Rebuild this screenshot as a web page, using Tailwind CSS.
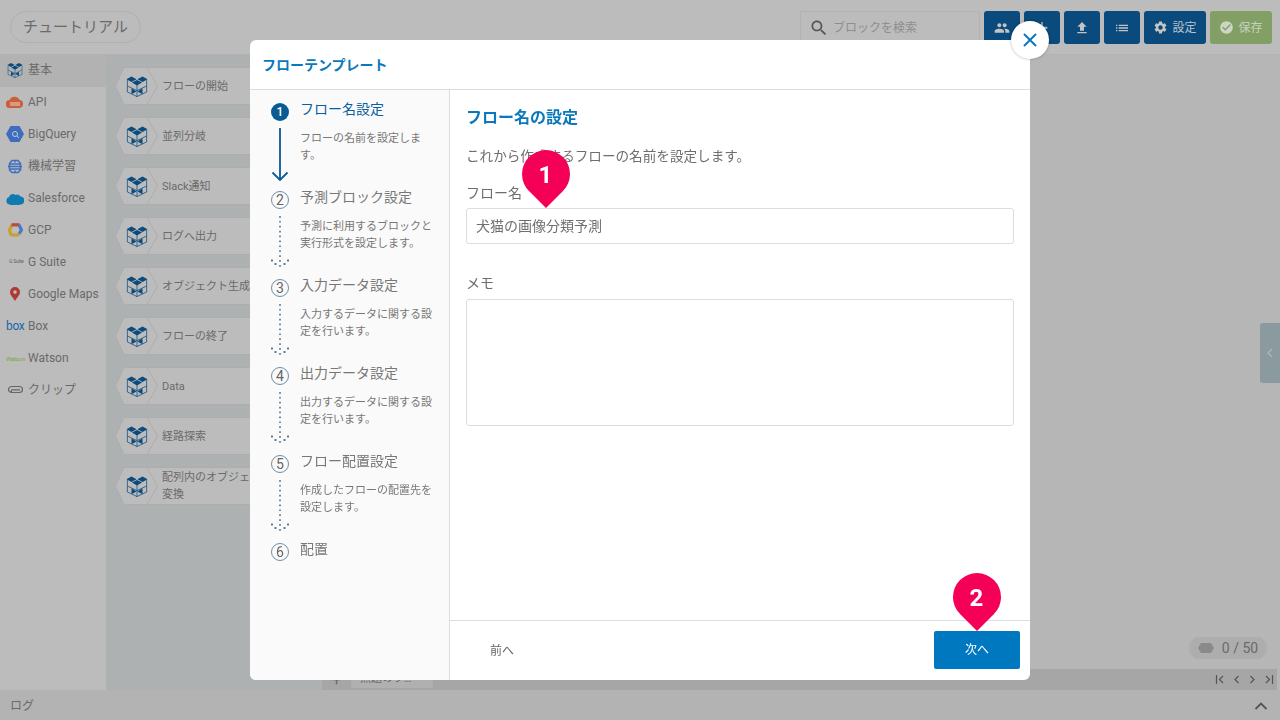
<!DOCTYPE html>
<html lang="ja">
<head>
    <meta charset="UTF-8">
    <title>フローテンプレート</title>
    <script src="https://cdn.jsdelivr.net/npm/@tailwindcss/browser@4"></script>
</head>
<body class="font-['Roboto','Noto_Sans_CJK_JP',sans-serif] overflow-hidden">
    <!-- shared icons -->
    <svg class="hidden">
        <symbol id="cube" viewBox="0 0 24 24">
            <path d="M1.500 5.500v13l10.500 5 10.500-5v-13M12 11v13M1.500 12l10.500 5 10.500-5" fill="none" stroke="#0a4a7c" stroke-width=".8"/>
            <path d="M.5 4.500 6 1.500l5.500 3L6 7.500zM12.500 4.500 18 1.500l5.500 3L18 7.500zM6.500 8.200 12 5.500l5.500 2.700L12 11.500zM6 14.500l5.500 3.500L6 21zM18 14.500 12.500 18l5.500 3z" fill="#0a4a7c"/>
        </symbol>
        <symbol id="hex" viewBox="0 0 43 38">
            <path d="M.5 19 9 .5h23L42.500 19 32 37.500H9z" fill="#bcbcbc" stroke="#adadad"/>
        </symbol>
        <symbol id="dots" viewBox="0 0 18 53">
            <path d="M9 0v53" fill="none" stroke="#5f7c90" stroke-width="1.700" stroke-dasharray="1.700 3.200"/>
            <path d="M0 43.500h2v2H0zM3.500 47h2v2h-2zM16 43.500h2v2h-2zM12.500 47h2v2h-2z" fill="#5f7c90"/>
        </symbol>
    </svg>

    <div class="h-screen w-screen flex flex-col bg-[#b6b6b6] text-[#6a6a6a]">
        <!-- Header -->
        <header class="h-[55px] shrink-0 flex items-center justify-between pl-[10px] pr-2 bg-[#bcbcbc] border-b border-[#b2b2b2]">
            <div class="h-[32px] w-[131px] flex items-center justify-center rounded-full border border-[#b0b0b0] text-[15px] pt-[1px]">チュートリアル</div>
            <div class="flex items-center gap-1 h-[33px] mt-[1px]">
                <div class="w-[180px] h-[33px] flex items-center gap-[4px] pl-2 border border-[#b2b2b2] rounded-[2px] text-[12px] text-[#8e8e8e]">
                    <svg class="w-[20px] h-[20px]" viewBox="0 0 24 24" fill="#555"><path d="M15.500 14h-.79l-.28-.27C15.410 12.590 16 11.110 16 9.500 16 5.910 13.090 3 9.500 3S3 5.910 3 9.500 5.910 16 9.500 16c1.610 0 3.090-.59 4.230-1.570l.27.28v.79l5 4.990L20.490 19l-4.990-5zm-6 0C7.010 14 5 11.990 5 9.500S7.010 5 9.500 5 14 7.010 14 9.500 11.990 14 9.500 14z"/></svg>
                    ブロックを検索
                </div>
                <div class="w-[36px] h-[33px] flex items-center justify-center rounded-[3px] bg-[#0a4a7c]">
                    <svg class="w-4 h-4" viewBox="0 0 24 24" fill="#c4c4c4"><path d="M16 11c1.660 0 2.990-1.340 2.990-3S17.660 5 16 5c-1.660 0-3 1.340-3 3s1.340 3 3 3zm-8 0c1.660 0 2.990-1.340 2.990-3S9.660 5 8 5C6.340 5 5 6.340 5 8s1.340 3 3 3zm0 2c-2.330 0-7 1.170-7 3.500V19h14v-2.500c0-2.330-4.670-3.500-7-3.500zm8 0c-.29 0-.62.02-.97.05 1.160.84 1.970 1.970 1.970 3.450V19h6v-2.500c0-2.330-4.670-3.500-7-3.500z"/></svg>
                </div>
                <div class="w-[36px] h-[33px] flex items-center justify-center rounded-[3px] bg-[#0a4a7c]">
                    <svg class="w-4 h-4" viewBox="0 0 24 24" fill="#c4c4c4"><path d="M11 3h2v7h7v3h-7v8h-2v-8H4v-3h7z"/></svg>
                </div>
                <div class="w-[36px] h-[33px] flex items-center justify-center rounded-[3px] bg-[#0a4a7c]">
                    <svg class="w-4 h-4" viewBox="0 0 24 24" fill="#c4c4c4"><path d="M9 16h6v-6h4l-7-7-7 7h4zm-4 2h14v2H5z"/></svg>
                </div>
                <div class="w-[36px] h-[33px] flex items-center justify-center rounded-[3px] bg-[#0a4a7c]">
                    <svg class="w-4 h-4" viewBox="0 0 24 24" fill="#c4c4c4"><path d="M3 13h2v-2H3v2zm0 4h2v-2H3v2zm0-8h2V7H3v2zm4 4h14v-2H7v2zm0 4h14v-2H7v2zM7 7v2h14V7H7z"/></svg>
                </div>
                <div class="w-[62px] h-[33px] flex items-center justify-center gap-1 rounded-[3px] bg-[#0a4a7c] text-[12px] text-[#b8c4cf]">
                    <svg class="w-[15px] h-[15px]" viewBox="0 0 24 24" fill="#c4c4c4"><path d="M19.140 12.940c.04-.3.06-.61.06-.94 0-.32-.02-.64-.07-.94l2.030-1.580c.18-.14.23-.41.12-.61l-1.920-3.320c-.12-.22-.37-.29-.59-.22l-2.390.96c-.5-.38-1.030-.7-1.620-.94l-.36-2.540c-.04-.24-.24-.41-.48-.41h-3.840c-.24 0-.43.17-.47.41l-.36 2.540c-.59.24-1.130.57-1.620.94l-2.390-.96c-.22-.08-.47 0-.59.22L2.740 8.870c-.12.21-.08.47.12.61l2.030 1.580c-.05.3-.09.63-.09.94s.02.64.07.94l-2.030 1.580c-.18.14-.23.41-.12.61l1.920 3.320c.12.22.37.29.59.22l2.390-.96c.5.38 1.030.7 1.620.94l.36 2.540c.05.24.24.41.48.41h3.840c.24 0 .44-.17.47-.41l.36-2.540c.59-.24 1.130-.56 1.620-.94l2.390.96c.22.08.47 0 .59-.22l1.920-3.320c.12-.22.07-.47-.12-.61l-2.010-1.580zM12 15.600c-1.980 0-3.600-1.620-3.600-3.600s1.620-3.600 3.600-3.600 3.600 1.620 3.600 3.600-1.620 3.600-3.600 3.600z"/></svg>
                    設定
                </div>
                <div class="w-[62px] h-[33px] flex items-center justify-center gap-1 rounded-[3px] bg-[#82a066] text-[12px] text-[#c6d2bb]">
                    <svg class="w-[15px] h-[15px]" viewBox="0 0 24 24" fill="#cdd6c4"><path d="M12 2C6.480 2 2 6.480 2 12s4.480 10 10 10 10-4.480 10-10S17.520 2 12 2zm-2 15l-5-5 1.410-1.410L10 14.170l7.590-7.590L19 8l-9 9z"/></svg>
                    保存
                </div>
            </div>
        </header>

        <div class="flex-1 flex min-h-0">
            <!-- Category sidebar -->
            <aside class="w-[106px] shrink-0 bg-[#bcbcbc] text-[12px]">
                <div class="relative h-[32px] flex items-center gap-[5px] pl-[7px] pb-[2px] bg-[#b2b2b2]">
                    <svg class="w-[16px] h-[16px]"><use href="#cube"/></svg>基本
                    <span class="absolute right-0 top-[13px] border-y-[4px] border-r-[4px] border-y-transparent border-r-[#adb1b1]"></span>
                </div>
                <div class="h-[32px] flex items-center gap-[4px] pl-[6px] pb-[2px]">
                    <svg class="w-[18px] h-[12px]" viewBox="0 0 18 12"><path d="M4 12a4 4 0 0 1-.5-8A5.500 5.500 0 0 1 13.500 3.800 4.200 4.200 0 0 1 14 12z" fill="#c9603c"/><rect x="4" y="6" width="10" height="4" fill="#d89a85"/></svg>API
                </div>
                <div class="h-[32px] flex items-center gap-[4px] pl-[6px] pb-[2px]">
                    <svg class="w-[18px] h-[16px]" viewBox="0 0 18 16"><path d="M4.500 0h9L18 8l-4.500 8h-9L0 8z" fill="#3f6cbc"/><circle cx="9" cy="8" r="2.500" fill="none" stroke="#bcd" stroke-width="1"/><path d="M11 10l2 2" stroke="#bcd"/></svg>BigQuery
                </div>
                <div class="h-[32px] flex items-center gap-[6px] pl-[8px] pb-[2px]">
                    <svg class="w-[14px] h-[15px]" viewBox="0 0 14 15" fill="none" stroke="#3f6fc0" stroke-width="1.500"><path d="M4 1.500h6l2.500 3v2l1 1-1 1v2.500L10 13.500H4L1.500 11V8.500l-1-1 1-1v-2zM1.500 5h11M.5 7.500h13M1.500 10h11M7 1.500v2M7 11.500v2.500"/></svg>機械学習
                </div>
                <div class="h-[32px] flex items-center gap-[4px] pl-[6px] pb-[2px]">
                    <svg class="w-[18px] h-[13px]" viewBox="0 0 18 13"><path d="M4 12.500a3.800 3.800 0 0 1-1-7.400A4 4 0 0 1 9.500 3a3.500 3.500 0 0 1 5 1.500A4 4 0 0 1 14 12.500a3 3 0 0 1-4 0 3.500 3.500 0 0 1-6 0z" fill="#0f7ab0"/></svg>Salesforce
                </div>
                <div class="h-[32px] flex items-center gap-[5px] pl-[8px] pb-[2px]">
                    <svg class="w-[15px] h-[14px]" viewBox="0 0 15 14" fill="none" stroke-width="3.200"><path d="M3 12.500 1.500 7 4 1.800" stroke="#c8a030"/><path d="M3.500 1.800h8" stroke="#bb4a3c"/><path d="M11 1.800 13.500 7 11 11" stroke="#4a78c4"/><path d="M11.500 12H3" stroke="#c8a030"/></svg>GCP
                </div>
                <div class="h-[32px] flex items-center gap-[3px] pl-[9px] pb-[2px]">
                    <span class="w-[16px] text-[5px] tracking-[-.2px] whitespace-nowrap text-[#666]">G Suite</span>G Suite
                </div>
                <div class="h-[32px] flex items-center gap-[8px] pl-[10px] pb-[2px]">
                    <svg class="w-[10px] h-[14px]" viewBox="0 0 10 14"><path fill-rule="evenodd" d="M5 14C3 10.500 0 8 0 5a5 5 0 0 1 10 0c0 3-3 5.500-5 9zM5 3.300a1.800 1.800 0 1 0 0 3.600 1.800 1.800 0 0 0 0-3.600z" fill="#ad3a33"/></svg>Google Maps
                </div>
                <div class="h-[32px] flex items-center gap-[4px] pl-[6px] pb-[2px]">
                    <span class="w-[18px] text-[12px] leading-none tracking-[-.3px] text-[#1669a8]">box</span>Box
                </div>
                <div class="h-[32px] flex items-center gap-[4px] pl-[6px] pb-[2px]">
                    <span class="w-[18px] text-[6px] tracking-[-.2px] text-[#7fa83e]">Watson</span>Watson
                </div>
                <div class="h-[32px] flex items-center gap-[5px] pl-[7px] pb-[2px]">
                    <svg class="w-[16px] h-[10px]" viewBox="0 0 16 10" fill="none" stroke="#666" stroke-width="1.200"><path d="M13 7.500H4.500a3 3 0 0 1 0-6h8a2.500 2.500 0 0 1 0 6H5.500a1.200 1.200 0 0 1 0-2.600H13"/></svg>クリップ
                </div>
            </aside>

            <!-- Block list -->
            <section class="w-[216px] shrink-0 bg-[#adb1b1] pt-3 pl-[9px] flex flex-col gap-[12px] text-[11px] leading-[17px] overflow-hidden">
                <div class="h-[38px] flex items-center">
                    <div class="relative z-10 w-[43px] h-[38px] shrink-0 flex items-center justify-center">
                        <svg class="absolute inset-0 w-full h-full"><use href="#hex"/></svg>
                        <svg class="relative w-[22px] h-[22px]"><use href="#cube"/></svg>
                    </div>
                    <div class="-ml-[11px] w-[170px] h-[38px] flex items-center pl-[15px] bg-[#bcbcbc] border-y border-[#adadad]">フローの開始</div>
                </div>
                <div class="h-[38px] flex items-center">
                    <div class="relative z-10 w-[43px] h-[38px] shrink-0 flex items-center justify-center">
                        <svg class="absolute inset-0 w-full h-full"><use href="#hex"/></svg>
                        <svg class="relative w-[22px] h-[22px]"><use href="#cube"/></svg>
                    </div>
                    <div class="-ml-[11px] w-[170px] h-[38px] flex items-center pl-[15px] bg-[#bcbcbc] border-y border-[#adadad]">並列分岐</div>
                </div>
                <div class="h-[38px] flex items-center">
                    <div class="relative z-10 w-[43px] h-[38px] shrink-0 flex items-center justify-center">
                        <svg class="absolute inset-0 w-full h-full"><use href="#hex"/></svg>
                        <svg class="relative w-[22px] h-[22px]"><use href="#cube"/></svg>
                    </div>
                    <div class="-ml-[11px] w-[170px] h-[38px] flex items-center pl-[15px] bg-[#bcbcbc] border-y border-[#adadad]">Slack通知</div>
                </div>
                <div class="h-[38px] flex items-center">
                    <div class="relative z-10 w-[43px] h-[38px] shrink-0 flex items-center justify-center">
                        <svg class="absolute inset-0 w-full h-full"><use href="#hex"/></svg>
                        <svg class="relative w-[22px] h-[22px]"><use href="#cube"/></svg>
                    </div>
                    <div class="-ml-[11px] w-[170px] h-[38px] flex items-center pl-[15px] bg-[#bcbcbc] border-y border-[#adadad]">ログへ出力</div>
                </div>
                <div class="h-[38px] flex items-center">
                    <div class="relative z-10 w-[43px] h-[38px] shrink-0 flex items-center justify-center">
                        <svg class="absolute inset-0 w-full h-full"><use href="#hex"/></svg>
                        <svg class="relative w-[22px] h-[22px]"><use href="#cube"/></svg>
                    </div>
                    <div class="-ml-[11px] w-[170px] h-[38px] flex items-center pl-[15px] bg-[#bcbcbc] border-y border-[#adadad]">オブジェクト生成</div>
                </div>
                <div class="h-[38px] flex items-center">
                    <div class="relative z-10 w-[43px] h-[38px] shrink-0 flex items-center justify-center">
                        <svg class="absolute inset-0 w-full h-full"><use href="#hex"/></svg>
                        <svg class="relative w-[22px] h-[22px]"><use href="#cube"/></svg>
                    </div>
                    <div class="-ml-[11px] w-[170px] h-[38px] flex items-center pl-[15px] bg-[#bcbcbc] border-y border-[#adadad]">フローの終了</div>
                </div>
                <div class="h-[38px] flex items-center">
                    <div class="relative z-10 w-[43px] h-[38px] shrink-0 flex items-center justify-center">
                        <svg class="absolute inset-0 w-full h-full"><use href="#hex"/></svg>
                        <svg class="relative w-[22px] h-[22px]"><use href="#cube"/></svg>
                    </div>
                    <div class="-ml-[11px] w-[170px] h-[38px] flex items-center pl-[15px] bg-[#bcbcbc] border-y border-[#adadad]">Data</div>
                </div>
                <div class="h-[38px] flex items-center">
                    <div class="relative z-10 w-[43px] h-[38px] shrink-0 flex items-center justify-center">
                        <svg class="absolute inset-0 w-full h-full"><use href="#hex"/></svg>
                        <svg class="relative w-[22px] h-[22px]"><use href="#cube"/></svg>
                    </div>
                    <div class="-ml-[11px] w-[170px] h-[38px] flex items-center pl-[15px] bg-[#bcbcbc] border-y border-[#adadad]">経路探索</div>
                </div>
                <div class="h-[38px] flex items-center">
                    <div class="relative z-10 w-[43px] h-[38px] shrink-0 flex items-center justify-center">
                        <svg class="absolute inset-0 w-full h-full"><use href="#hex"/></svg>
                        <svg class="relative w-[22px] h-[22px]"><use href="#cube"/></svg>
                    </div>
                    <div class="-ml-[11px] w-[170px] h-[38px] flex items-center pl-[15px] bg-[#bcbcbc] border-y border-[#adadad]"><span class="w-[125px]">配列内のオブジェクトを変換</span></div>
                </div>
            </section>

            <!-- Canvas -->
            <main class="relative flex-1 flex flex-col min-w-0">
                <div class="flex-1 relative">
                    <div class="absolute right-0 top-[268px] w-[20px] h-[60px] flex items-center justify-center rounded-l-[3px] bg-[#8a9a9f]">
                        <svg class="w-[12px] h-[12px]" viewBox="0 0 12 12" fill="none" stroke="#a8b4b8" stroke-width="1.500"><path d="M8 2 4 6l4 4"/></svg>
                    </div>
                    <div class="absolute right-[13px] bottom-[10px] w-[78px] h-[22px] flex items-center justify-center gap-2 rounded-full bg-[#adadad] text-[14px]">
                        <svg class="w-[16px] h-[10px]" viewBox="0 0 16 10"><path d="M3 0h10l3 5-3 5H3L0 5z" fill="#8a8a8a"/></svg>
                        0 / 50
                    </div>
                </div>
                <div class="h-[21px] shrink-0 flex items-center mr-[3px] bg-[#a6a6a6] text-[11px]">
                    <span class="w-[29px] text-center text-[16px]">+</span>
                    <span class="w-[82px] h-[18px] -mt-[1px] flex items-center pl-[9px] rounded-b-[2px] bg-[#b0b0b0]">無題のフ…</span>
                    <div class="ml-auto mr-[3px] flex items-center gap-[5px]">
                        <svg class="w-[11px] h-[11px]" viewBox="0 0 11 11" fill="none" stroke="#555" stroke-width="1.200"><path d="M1.500 1v9M8 2 4.500 5.500 8 9"/></svg>
                        <svg class="w-[11px] h-[11px]" viewBox="0 0 11 11" fill="none" stroke="#555" stroke-width="1.200"><path d="M7.500 2 4 5.500 7.500 9"/></svg>
                        <svg class="w-[11px] h-[11px]" viewBox="0 0 11 11" fill="none" stroke="#555" stroke-width="1.200"><path d="M3.500 2 7 5.500 3.500 9"/></svg>
                        <svg class="w-[11px] h-[11px]" viewBox="0 0 11 11" fill="none" stroke="#555" stroke-width="1.200"><path d="M9.500 1v9M3 2l3.500 3.500L3 9"/></svg>
                    </div>
                </div>
            </main>
        </div>

        <!-- Log bar -->
        <footer class="h-[30px] shrink-0 flex items-center justify-between pl-[10px] pr-[12px] pt-[1px] bg-[#b3b3b3] text-[12px]">
            ログ
            <svg class="w-[14px] h-[10px]" viewBox="0 0 14 10" fill="none" stroke="#555" stroke-width="1.800"><path d="M1.500 8 7 2.500 12.500 8"/></svg>
        </footer>
    </div>

    <!-- Modal -->
    <div class="fixed left-[250px] top-[40px] w-[780px] h-[640px] flex flex-col rounded-[6px] bg-white">
        <div class="h-[50px] shrink-0 flex items-center pl-3 pt-[1px] border-b border-[#ddd] text-[14px] font-bold text-[#0a78bd]">フローテンプレート</div>
        <div class="flex-1 flex min-h-0">
            <!-- Steps -->
            <div class="w-[200px] shrink-0 pt-2 pl-[21px] bg-[#fafafa] border-r border-[#ddd] rounded-bl-[6px] text-[#777]">
                <div class="h-[88px] flex gap-[11px]">
                    <div class="w-[18px] flex flex-col items-center">
                        <div class="mt-[5px] w-[18px] h-[18px] shrink-0 flex items-center justify-center rounded-full bg-[#0a5a94] text-[12px] font-medium text-white">1</div>
                        <svg class="mt-[7px] w-[18px] h-[53px]" viewBox="0 0 18 53" fill="none" stroke="#0a5a94" stroke-width="1.800"><path d="M9 0v52M1.500 44.500 9 52l7.500-7.500"/></svg>
                    </div>
                    <div>
                        <div class="h-6 leading-[23px] text-[14px] text-[#0a5f9e]">フロー名設定</div>
                        <p class="mt-2 w-[134px] text-[11px] leading-[17px]">フローの名前を設定します。</p>
                    </div>
                </div>
                <div class="h-[88px] flex gap-[11px]">
                    <div class="w-[18px] flex flex-col items-center">
                        <div class="mt-[5px] w-[18px] h-[18px] shrink-0 flex items-center justify-center rounded-full border-[1.5px] border-[#6a8ea8] text-[14px] text-[#666]">2</div>
                        <svg class="mt-[7px] w-[18px] h-[53px]"><use href="#dots"/></svg>
                    </div>
                    <div>
                        <div class="h-6 leading-[23px] text-[14px]">予測ブロック設定</div>
                        <p class="mt-2 w-[134px] text-[11px] leading-[17px]">予測に利用するブロックと実行形式を設定します。</p>
                    </div>
                </div>
                <div class="h-[88px] flex gap-[11px]">
                    <div class="w-[18px] flex flex-col items-center">
                        <div class="mt-[5px] w-[18px] h-[18px] shrink-0 flex items-center justify-center rounded-full border-[1.5px] border-[#6a8ea8] text-[14px] text-[#666]">3</div>
                        <svg class="mt-[7px] w-[18px] h-[53px]"><use href="#dots"/></svg>
                    </div>
                    <div>
                        <div class="h-6 leading-[23px] text-[14px]">入力データ設定</div>
                        <p class="mt-2 w-[134px] text-[11px] leading-[17px]">入力するデータに関する設定を行います。</p>
                    </div>
                </div>
                <div class="h-[88px] flex gap-[11px]">
                    <div class="w-[18px] flex flex-col items-center">
                        <div class="mt-[5px] w-[18px] h-[18px] shrink-0 flex items-center justify-center rounded-full border-[1.5px] border-[#6a8ea8] text-[14px] text-[#666]">4</div>
                        <svg class="mt-[7px] w-[18px] h-[53px]"><use href="#dots"/></svg>
                    </div>
                    <div>
                        <div class="h-6 leading-[23px] text-[14px]">出力データ設定</div>
                        <p class="mt-2 w-[134px] text-[11px] leading-[17px]">出力するデータに関する設定を行います。</p>
                    </div>
                </div>
                <div class="h-[88px] flex gap-[11px]">
                    <div class="w-[18px] flex flex-col items-center">
                        <div class="mt-[5px] w-[18px] h-[18px] shrink-0 flex items-center justify-center rounded-full border-[1.5px] border-[#6a8ea8] text-[14px] text-[#666]">5</div>
                        <svg class="mt-[7px] w-[18px] h-[53px]"><use href="#dots"/></svg>
                    </div>
                    <div>
                        <div class="h-6 leading-[23px] text-[14px]">フロー配置設定</div>
                        <p class="mt-2 w-[134px] text-[11px] leading-[17px]">作成したフローの配置先を設定します。</p>
                    </div>
                </div>
                <div class="flex gap-[11px]">
                    <div class="mt-[5px] w-[18px] h-[18px] shrink-0 flex items-center justify-center rounded-full border-[1.5px] border-[#6a8ea8] text-[14px] text-[#666]">6</div>
                    <div class="h-6 leading-[23px] text-[14px]">配置</div>
                </div>
            </div>

            <!-- Form -->
            <div class="flex-1 flex flex-col min-w-0">
                <div class="flex-1 pt-[17px] px-4 text-[#6e6e6e]">
                    <h2 class="h-[22px] leading-[22px] text-[16px] font-bold text-[#0a78bd]">フロー名の設定</h2>
                    <p class="mt-[17px] h-[20px] leading-[20px] text-[13.6px]">これから作成するフローの名前を設定します。</p>
                    <label class="block mt-[17px] h-[20px] leading-[20px] text-[14px]">フロー名</label>
                    <div class="mt-[5px] h-[36px] flex items-center pl-[9px] border border-[#ddd] rounded-[3px] text-[14px]">犬猫の画像分類予測</div>
                    <label class="block mt-[29px] h-[20px] leading-[20px] text-[14px]">メモ</label>
                    <div class="mt-[6px] h-[127px] border border-[#ddd] rounded-[3px]"></div>
                </div>
                <div class="h-[60px] shrink-0 flex items-center justify-between pl-[40px] pr-[10px] border-t border-[#ddd] text-[12px]">
                    <span class="text-[#666]">前へ</span>
                    <button class="w-[86px] h-[38px] mt-[-1px] rounded-[2px] bg-[#0078c0] text-white">次へ</button>
                </div>
            </div>
        </div>

        <!-- Close button -->
        <div class="absolute left-[761px] -top-[19px] w-[38px] h-[38px] flex items-center justify-center rounded-full bg-white shadow-[0_0_3px_rgba(0,0,0,.3)]">
            <svg class="w-[16px] h-[16px]" viewBox="0 0 16 16" fill="none" stroke="#0a78bd" stroke-width="2"><path d="M2 2l12 12M14 2 2 14"/></svg>
        </div>
    </div>

    <!-- Tutorial pins -->
    <div class="fixed left-[522px] top-[150px] w-[48px] h-[58px] flex justify-center pt-[10px] pr-[1px] text-[24px] leading-[30px] font-bold text-white">
        <svg class="absolute inset-0 w-full h-full" viewBox="0 0 48 58"><path d="M24 58 7 41A24 24 0 1 1 41 41z" fill="#f50057"/></svg>
        <span class="relative">1</span>
    </div>
    <div class="fixed left-[953px] top-[573px] w-[48px] h-[58px] flex justify-center pt-[10px] pr-[1px] text-[24px] leading-[30px] font-bold text-white">
        <svg class="absolute inset-0 w-full h-full" viewBox="0 0 48 58"><path d="M24 58 7 41A24 24 0 1 1 41 41z" fill="#f50057"/></svg>
        <span class="relative">2</span>
    </div>
</body>
</html>
